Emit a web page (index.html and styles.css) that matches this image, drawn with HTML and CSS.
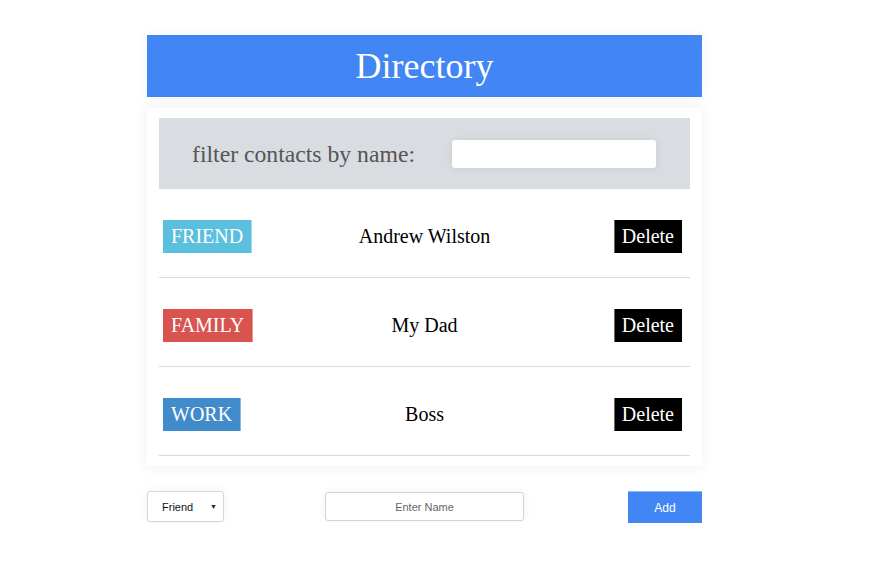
FILE: index.html
```html
<!DOCTYPE html>
<html>
<head>
<meta charset="utf-8">
<title>Directory</title>
<link rel="stylesheet" href="styles.css">
</head>
<body>
<div class="app">
  <header class="header">
    <h1 class="title">Directory</h1>
  </header>
  <section class="card">
    <div class="filter">
      <label class="filter-label" for="filter">filter contacts by name:</label>
      <input class="filter-input" id="filter" type="text">
    </div>
    <ul class="list">
      <li class="row">
        <span class="badge badge-friend">FRIEND</span>
        <span class="name">Andrew Wilston</span>
        <button class="delete">Delete</button>
      </li>
      <li class="row">
        <span class="badge badge-family">FAMILY</span>
        <span class="name">My Dad</span>
        <button class="delete">Delete</button>
      </li>
      <li class="row">
        <span class="badge badge-work">WORK</span>
        <span class="name">Boss</span>
        <button class="delete">Delete</button>
      </li>
    </ul>
  </section>
  <form class="add-form">
    <div class="select">
      <span class="select-value">Friend</span>
      <span class="select-arrow">&#9660;</span>
    </div>
    <input class="name-input" type="text" placeholder="Enter Name">
    <button class="add" type="button">Add</button>
  </form>
</div>
</body>
</html>
```
FILE: styles.css
```css
* { box-sizing: border-box; }
html, body { margin: 0; padding: 0; background: #fff; }
body { font-family: "Liberation Serif", "Times New Roman", serif; }

.app {
  width: 555px;
  margin: 35px 0 0 147px;
}

.header {
  height: 62px;
  background: #4285f4;
  display: flex;
  align-items: center;
  justify-content: center;
  box-shadow: 0 0 14px rgba(0,0,0,0.05);
}
.title {
  margin: 0;
  font-weight: normal;
  font-size: 36px;
  color: #fff;
  line-height: 41px;
  padding-top: 1px;
}

.card {
  margin-top: 11px;
  background: #fff;
  padding: 10px 12px 10px 12px;
  box-shadow: 0 0 14px rgba(0,0,0,0.07);
}

.filter {
  height: 71px;
  background: #d9dce0;
  display: flex;
  align-items: center;
  padding-left: 33px;
}
.filter-label {
  font-size: 23.7px;
  color: #555;
  margin-top: 1px;
}
.filter-input {
  margin-left: 37px;
  width: 204px;
  height: 28px;
  border: none;
  border-radius: 3px;
  background: #fff;
  box-shadow: 0 0 8px rgba(0,0,0,0.08);
  outline: none;
}

.list { list-style: none; margin: 0; padding: 0; }
.row {
  display: flex;
  align-items: center;
  justify-content: space-between;
  padding: 31px 8px 24px 4px;
  border-bottom: 1px solid #d8dadf;
  position: relative;
}
.badge {
  font-size: 20px;
  color: #fff;
  line-height: 23px;
  padding: 5px 8px;
  border-right: 1px solid rgba(255,255,255,0.4);
}
.badge-friend { background: #5bc0de; }
.badge-family { background: #d9534f; }
.badge-work { background: #428bca; }

.name {
  position: absolute;
  left: 0;
  right: 0;
  text-align: center;
  font-size: 20px;
  color: #000;
  pointer-events: none;
}

.delete {
  font-family: "Liberation Serif", "Times New Roman", serif;
  font-size: 20px;
  line-height: 23px;
  color: #fff;
  background: #000;
  border: none;
  border-left: 1px solid #666;
  padding: 5px 8px 5px 7px;
  margin: 0;
}

.add-form {
  margin-top: 25px;
  display: flex;
  align-items: flex-start;
  justify-content: space-between;
}
.select {
  width: 77px;
  height: 31px;
  border: 1px solid #d6d6d6;
  border-radius: 3px;
  box-shadow: 0 0 10px rgba(0,0,0,0.06);
  display: flex;
  align-items: center;
  justify-content: space-between;
  padding: 0 6px 0 14px;
  font-family: "Liberation Sans", Arial, sans-serif;
  font-size: 11px;
  color: #111;
}
.select-arrow { font-size: 7px; color: #222; }

.name-input {
  width: 199px;
  height: 29px;
  border: 1px solid #d4d4d4;
  border-radius: 3px;
  box-shadow: 0 0 10px rgba(0,0,0,0.06);
  text-align: center;
  font-family: "Liberation Sans", Arial, sans-serif;
  font-size: 11px;
  outline: none;
  margin-top: 1px;
  margin-right: 3px;
}
.name-input::placeholder { color: #666; }

.add {
  width: 74px;
  height: 32px;
  background: #4285f4;
  border: none;
  border-top: 1px solid #8fb4f7;
  color: #fff;
  font-family: "Liberation Sans", Arial, sans-serif;
  font-size: 12px;
  padding: 0;
}
```
